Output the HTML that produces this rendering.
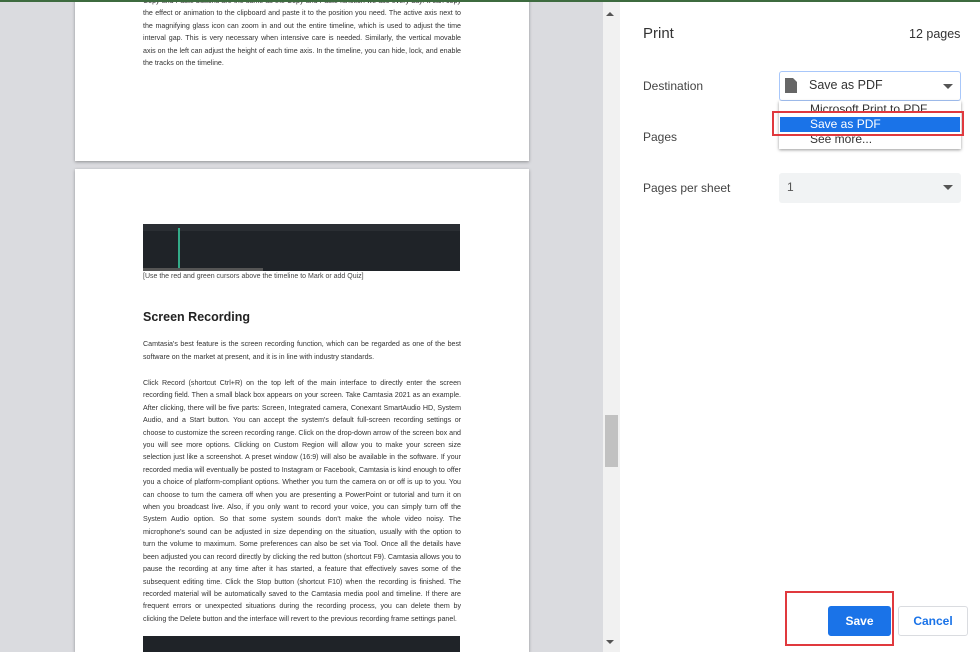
<!DOCTYPE html>
<html><head><meta charset="utf-8"><style>
*{margin:0;padding:0;box-sizing:border-box}
html,body{width:980px;height:652px;overflow:hidden}
body{background:#fff;font-family:"Liberation Sans",sans-serif;position:relative}
.gray{position:absolute;left:0;top:0;width:603px;height:652px;background:#dadbdf}
.track{position:absolute;left:603px;top:0;width:17px;height:652px;background:#f1f1f1}
.thumb{position:absolute;left:605px;top:415px;width:13px;height:52px;background:#c1c1c1}
.page{position:absolute;left:75px;width:454px;background:#fff;box-shadow:0 1px 3px rgba(0,0,0,.35);overflow:hidden}
.txt{position:absolute;left:68px;width:318px;font-size:7.1px;line-height:13px;color:#333;text-align:justify}
.topline{position:absolute;left:0;top:0;width:980px;height:2px;background:#3d6b3f}
.lbl{position:absolute;font-size:12px;color:#444}
.sel{position:absolute;left:779px;width:182px;height:30px;background:#f1f3f4;border-radius:3px}
.arrow{position:absolute;width:0;height:0;border-left:5px solid transparent;border-right:5px solid transparent;border-top:5px solid #555}
</style></head><body>
<div class="gray"></div>
<div class="track"></div>
<div class="thumb"></div>
<div class="arrow" style="left:606px;top:12px;border-top:none;border-bottom:4px solid #555;border-left-width:4px;border-right-width:4px"></div>
<div class="arrow" style="left:606px;top:640px;border-top-width:4px;border-left-width:4px;border-right-width:4px"></div>

<div class="page" style="top:-5px;height:166px">
<div class="txt" style="top:0;line-height:12.4px">Copy and Paste buttons are the same as the Copy and Paste function we use every day. It can copy the effect or animation to the clipboard and paste it to the position you need. The active axis next to the magnifying glass icon can zoom in and out the entire timeline, which is used to adjust the time interval gap. This is very necessary when intensive care is needed. Similarly, the vertical movable axis on the left can adjust the height of each time axis. In the timeline, you can hide, lock, and enable the tracks on the timeline.</div>
</div>

<div class="page" style="top:169px;height:483px">
<div style="position:absolute;left:68px;top:55px;width:317px;height:47px;background:#1f2328">
<div style="position:absolute;left:0;top:0;width:317px;height:7px;background:#2a2e33"></div>
<div style="position:absolute;left:35px;top:4px;width:2px;height:43px;background:#3a8"></div>
<div style="position:absolute;left:0;top:44px;width:120px;height:3px;background:#555"></div>
</div>
<div style="position:absolute;left:68px;top:104px;font-size:7px;color:#444">[Use the red and green cursors above the timeline to Mark or add Quiz]</div>
<div style="position:absolute;left:68px;top:141px;font-size:12.5px;font-weight:bold;color:#222">Screen Recording</div>
<div class="txt" style="top:169px">Camtasia's best feature is the screen recording function, which can be regarded as one of the best software on the market at present, and it is in line with industry standards.</div>
<div class="txt" style="top:208px;line-height:12.4px">Click Record (shortcut Ctrl+R) on the top left of the main interface to directly enter the screen recording field. Then a small black box appears on your screen. Take Camtasia 2021 as an example. After clicking, there will be five parts: Screen, Integrated camera, Conexant SmartAudio HD, System Audio, and a Start button. You can accept the system's default full-screen recording settings or choose to customize the screen recording range. Click on the drop-down arrow of the screen box and you will see more options. Clicking on Custom Region will allow you to make your screen size selection just like a screenshot. A preset window (16:9) will also be available in the software. If your recorded media will eventually be posted to Instagram or Facebook, Camtasia is kind enough to offer you a choice of platform-compliant options. Whether you turn the camera on or off is up to you. You can choose to turn the camera off when you are presenting a PowerPoint or tutorial and turn it on when you broadcast live. Also, if you only want to record your voice, you can simply turn off the System Audio option. So that some system sounds don't make the whole video noisy. The microphone's sound can be adjusted in size depending on the situation, usually with the option to turn the volume to maximum. Some preferences can also be set via Tool. Once all the details have been adjusted you can record directly by clicking the red button (shortcut F9). Camtasia allows you to pause the recording at any time after it has started, a feature that effectively saves some of the subsequent editing time. Click the Stop button (shortcut F10) when the recording is finished. The recorded material will be automatically saved to the Camtasia media pool and timeline. If there are frequent errors or unexpected situations during the recording process, you can delete them by clicking the Delete button and the interface will revert to the previous recording frame settings panel.</div>
<div style="position:absolute;left:68px;top:467px;width:317px;height:30px;background:#1f2328"></div>
</div>

<div class="topline"></div>

<div class="lbl" style="left:643px;top:25px;font-size:15px;color:#333">Print</div>
<div class="lbl" style="left:909px;top:27px;font-size:12.5px;color:#333">12 pages</div>
<div class="lbl" style="left:643px;top:79px">Destination</div>
<div class="lbl" style="left:643px;top:130px">Pages</div>
<div class="lbl" style="left:643px;top:181px">Pages per sheet</div>

<div style="position:absolute;left:779px;top:71px;width:182px;height:30px;border:1px solid #a8c7fa;border-radius:3px;background:#fff"></div>
<svg style="position:absolute;left:785px;top:78px" width="12" height="15" viewBox="0 0 12 15"><path d="M0 0H8L12 4V15H0Z" fill="#666"/></svg>
<div class="lbl" style="left:809px;top:78px;font-size:12.5px;color:#333">Save as PDF</div>
<div class="arrow" style="left:943px;top:84px"></div>

<div style="position:absolute;left:779px;top:101px;width:182px;height:48px;background:#fff;box-shadow:0 1px 3px rgba(0,0,0,.4)"></div>
<div class="lbl" style="left:810px;top:102px;font-size:12px;color:#333">Microsoft Print to PDF</div>
<div style="position:absolute;left:780px;top:117px;width:180px;height:15px;background:#1a73e8"></div>
<div class="lbl" style="left:810px;top:117px;font-size:12px;color:#fff">Save as PDF</div>
<div class="lbl" style="left:810px;top:132px;font-size:12px;color:#333">See more...</div>
<div style="position:absolute;left:772px;top:111px;width:192px;height:25px;border:2px solid #e0393e"></div>

<div class="sel" style="top:173px"></div>
<div class="lbl" style="left:787px;top:180px;color:#555">1</div>
<div class="arrow" style="left:943px;top:185px"></div>

<div style="position:absolute;left:785px;top:591px;width:109px;height:55px;border:2px solid #e0393e"></div>
<div style="position:absolute;left:828px;top:606px;width:63px;height:30px;background:#1a73e8;border-radius:3px;color:#fff;font-size:12px;font-weight:bold;text-align:center;line-height:30px">Save</div>
<div style="position:absolute;left:898px;top:606px;width:70px;height:30px;border:1px solid #dadce0;border-radius:3px;color:#1a73e8;font-size:12px;font-weight:bold;text-align:center;line-height:28px">Cancel</div>
</body></html>
